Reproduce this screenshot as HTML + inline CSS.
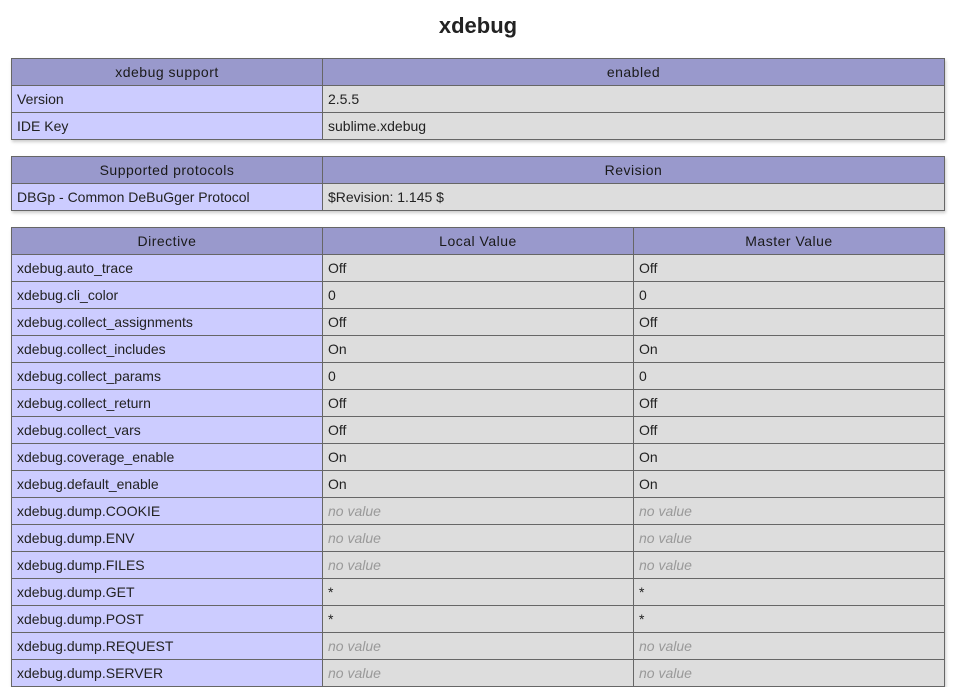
<!DOCTYPE html>
<html><head><style>
body{margin:0;background:#fff;color:#222;font-family:"Liberation Sans",Arial,sans-serif;font-size:14px;}
h1{text-align:center;font-size:22px;margin:0;position:absolute;top:12px;left:0;width:956px;line-height:28px;}
table{position:absolute;left:11px;width:934px;border-collapse:collapse;table-layout:fixed;box-shadow:1px 2px 3px #ccc;}
td,th{border:1px solid #666;height:26px;padding:0 5px;vertical-align:middle;white-space:nowrap;overflow:hidden;}
th{background:#9999cc;font-weight:normal;text-align:center;height:26px;letter-spacing:0.5px;color:#1a1a1a;}
.e{background:#ccccff;}
.v{background:#ddd;}
i{color:#999;}
</style></head><body>
<h1>xdebug</h1>
<table style="top:58px"><colgroup><col style="width:311px"><col></colgroup>
<tr><th>xdebug support</th><th>enabled</th></tr>
<tr><td class="e">Version</td><td class="v">2.5.5</td></tr>
<tr><td class="e">IDE Key</td><td class="v">sublime.xdebug</td></tr>
</table>
<table style="top:156px"><colgroup><col style="width:311px"><col></colgroup>
<tr><th>Supported protocols</th><th>Revision</th></tr>
<tr><td class="e">DBGp - Common DeBuGger Protocol</td><td class="v">$Revision: 1.145 $</td></tr>
</table>
<table style="top:227px"><colgroup><col style="width:311px"><col style="width:311px"><col></colgroup>
<tr><th>Directive</th><th>Local Value</th><th>Master Value</th></tr>
<tr><td class="e">xdebug.auto_trace</td><td class="v">Off</td><td class="v">Off</td></tr>
<tr><td class="e">xdebug.cli_color</td><td class="v">0</td><td class="v">0</td></tr>
<tr><td class="e">xdebug.collect_assignments</td><td class="v">Off</td><td class="v">Off</td></tr>
<tr><td class="e">xdebug.collect_includes</td><td class="v">On</td><td class="v">On</td></tr>
<tr><td class="e">xdebug.collect_params</td><td class="v">0</td><td class="v">0</td></tr>
<tr><td class="e">xdebug.collect_return</td><td class="v">Off</td><td class="v">Off</td></tr>
<tr><td class="e">xdebug.collect_vars</td><td class="v">Off</td><td class="v">Off</td></tr>
<tr><td class="e">xdebug.coverage_enable</td><td class="v">On</td><td class="v">On</td></tr>
<tr><td class="e">xdebug.default_enable</td><td class="v">On</td><td class="v">On</td></tr>
<tr><td class="e">xdebug.dump.COOKIE</td><td class="v"><i>no value</i></td><td class="v"><i>no value</i></td></tr>
<tr><td class="e">xdebug.dump.ENV</td><td class="v"><i>no value</i></td><td class="v"><i>no value</i></td></tr>
<tr><td class="e">xdebug.dump.FILES</td><td class="v"><i>no value</i></td><td class="v"><i>no value</i></td></tr>
<tr><td class="e">xdebug.dump.GET</td><td class="v">*</td><td class="v">*</td></tr>
<tr><td class="e">xdebug.dump.POST</td><td class="v">*</td><td class="v">*</td></tr>
<tr><td class="e">xdebug.dump.REQUEST</td><td class="v"><i>no value</i></td><td class="v"><i>no value</i></td></tr>
<tr><td class="e">xdebug.dump.SERVER</td><td class="v"><i>no value</i></td><td class="v"><i>no value</i></td></tr>
</table>
</body></html>
